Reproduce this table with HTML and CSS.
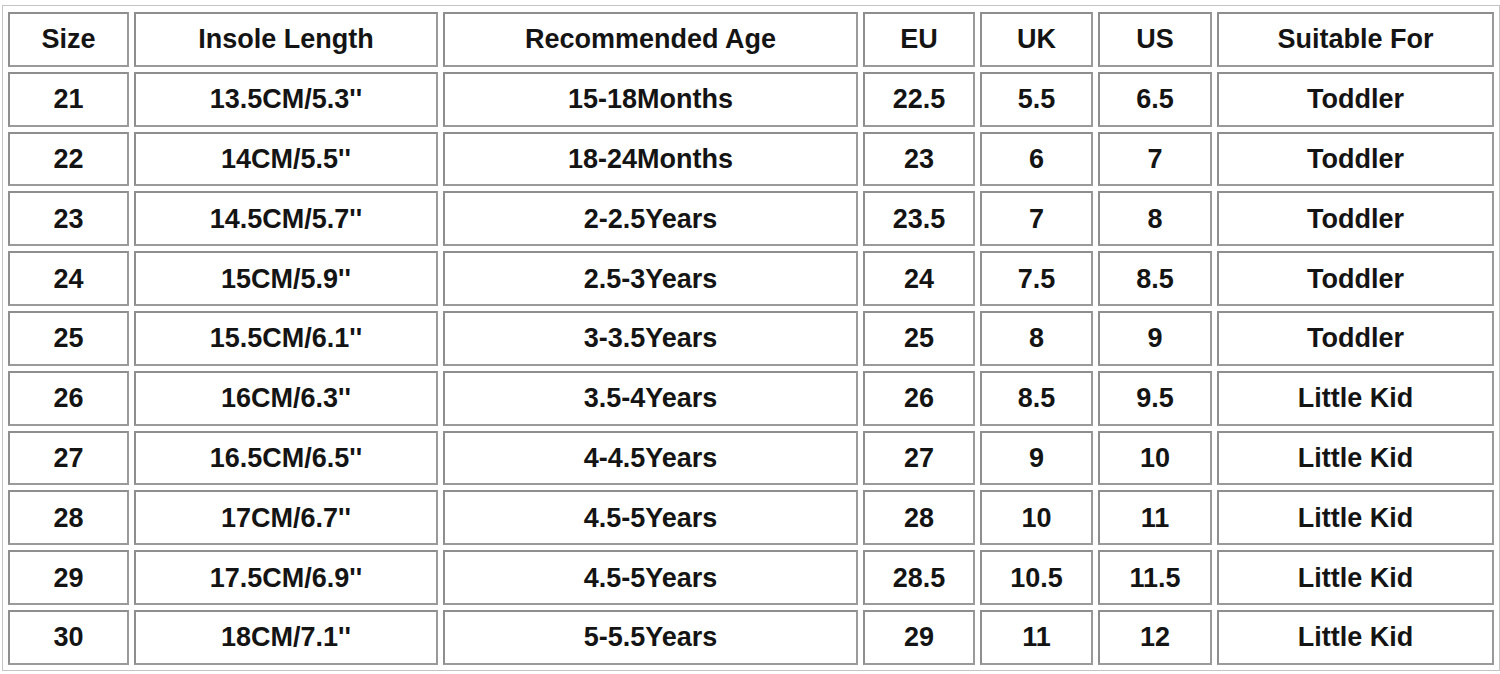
FILE: index.html
```html
<!DOCTYPE html>
<html>
<head>
<meta charset="utf-8">
<link rel="stylesheet" href="styles.css">
</head>
<body>
<table class="size-table">
  <tr><td class="c-size">Size</td><td class="c-insole">Insole Length</td><td class="c-age">Recommended Age</td><td class="c-eu">EU</td><td class="c-uk">UK</td><td class="c-us">US</td><td class="c-for">Suitable For</td></tr>
  <tr><td>21</td><td>13.5CM/5.3''</td><td>15-18Months</td><td>22.5</td><td>5.5</td><td>6.5</td><td>Toddler</td></tr>
  <tr><td>22</td><td>14CM/5.5''</td><td>18-24Months</td><td>23</td><td>6</td><td>7</td><td>Toddler</td></tr>
  <tr><td>23</td><td>14.5CM/5.7''</td><td>2-2.5Years</td><td>23.5</td><td>7</td><td>8</td><td>Toddler</td></tr>
  <tr><td>24</td><td>15CM/5.9''</td><td>2.5-3Years</td><td>24</td><td>7.5</td><td>8.5</td><td>Toddler</td></tr>
  <tr><td>25</td><td>15.5CM/6.1''</td><td>3-3.5Years</td><td>25</td><td>8</td><td>9</td><td>Toddler</td></tr>
  <tr><td>26</td><td>16CM/6.3''</td><td>3.5-4Years</td><td>26</td><td>8.5</td><td>9.5</td><td>Little Kid</td></tr>
  <tr><td>27</td><td>16.5CM/6.5''</td><td>4-4.5Years</td><td>27</td><td>9</td><td>10</td><td>Little Kid</td></tr>
  <tr><td>28</td><td>17CM/6.7''</td><td>4.5-5Years</td><td>28</td><td>10</td><td>11</td><td>Little Kid</td></tr>
  <tr><td>29</td><td>17.5CM/6.9''</td><td>4.5-5Years</td><td>28.5</td><td>10.5</td><td>11.5</td><td>Little Kid</td></tr>
  <tr><td>30</td><td>18CM/7.1''</td><td>5-5.5Years</td><td>29</td><td>11</td><td>12</td><td>Little Kid</td></tr>
</table>
</body>
</html>
```
FILE: styles.css
```css
html, body {
  margin: 0;
  background: #ffffff;
}
body {
  padding: 5px 0 0 2px;
  font-family: "Liberation Sans", Arial, sans-serif;
}
.size-table {
  border-collapse: separate;
  border-spacing: 5px;
  border: 1px solid #c4c4c4;
  padding-top: 1px;
}
.size-table td {
  border: 2px solid #8e8e8e;
  border-right-color: #9a9a9a;
  border-bottom-color: #9a9a9a;
  height: 54.8px;
  box-sizing: border-box;
  padding: 1px 0 0;
  text-align: center;
  vertical-align: middle;
  font-weight: bold;
  font-size: 27px;
  color: #141414;
  line-height: 1;
}
.size-table td.c-size { width: 121px; }
.size-table td.c-insole { width: 304px; }
.size-table td.c-age { width: 415px; }
.size-table td.c-eu { width: 112px; }
.size-table td.c-uk { width: 113px; }
.size-table td.c-us { width: 114px; }
.size-table td.c-for { width: 277px; }
```
